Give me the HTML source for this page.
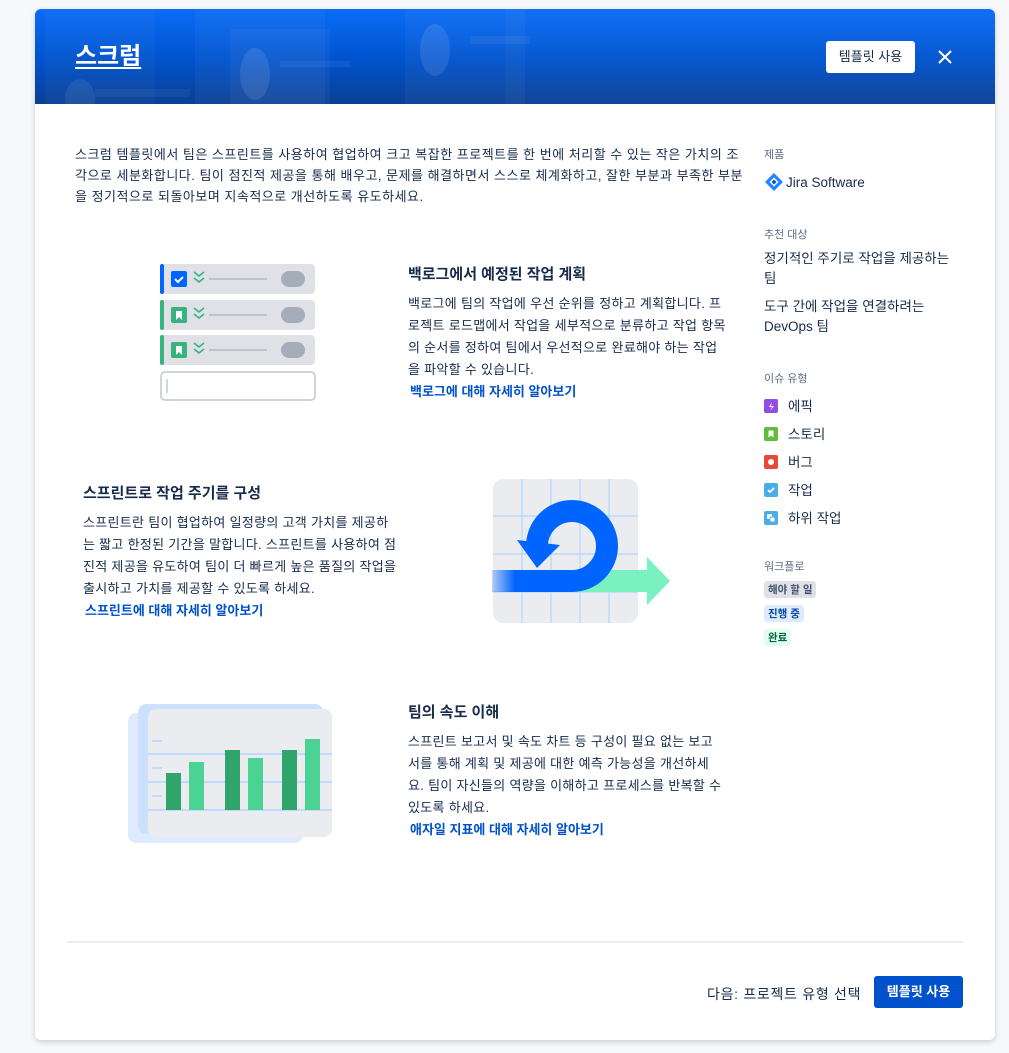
<!DOCTYPE html>
<html><head><meta charset="utf-8"><style>
*{margin:0;padding:0;box-sizing:border-box}
body{width:1009px;height:1053px;background:#f7f8fa;font-family:"Liberation Sans","Noto Sans CJK KR",sans-serif;color:#172b4d;position:relative;overflow:hidden}
.modal{position:absolute;left:35px;top:9px;width:960px;height:1031px;background:#fff;border-radius:6px;box-shadow:0 2px 6px rgba(9,30,66,.2);overflow:hidden}
.hdr{position:absolute;left:0;top:0;width:960px;height:95px;background:linear-gradient(180deg,#0a6cf7 0%,#0052cc 55%,#0a3f93 100%);overflow:hidden}
.a{position:absolute}
.t{position:absolute;font-size:13px;line-height:22px;color:#172b4d;letter-spacing:.3px;word-break:break-all}
h3{position:absolute;font-size:15px;font-weight:bold;color:#172b4d}
.lnk{position:absolute;font-size:13px;font-weight:bold;color:#0052cc}
.lbl{position:absolute;font-size:11px;color:#5e6c84;left:729px}
.side{position:absolute;left:729px;font-size:13.5px;color:#172b4d}
.ic{display:inline-block;width:14px;height:14px;border-radius:2px;vertical-align:-2px;margin-right:10px;position:relative}
.ic svg{position:absolute;left:0;top:0}
.tag{position:absolute;left:729px;font-size:10.5px;font-weight:bold;padding:1px 4px;border-radius:3px}
</style></head><body>
<div class="modal">
<div class="hdr">
 <div class="a" style="left:10px;top:0;width:110px;height:95px;background:rgba(255,255,255,.03)"></div>
 <div class="a" style="left:160px;top:0;width:130px;height:95px;background:rgba(255,255,255,.04)"></div>
 <div class="a" style="left:30px;top:70px;width:30px;height:40px;border-radius:50%;background:rgba(255,255,255,.08)"></div>
 <div class="a" style="left:60px;top:80px;width:95px;height:8px;background:rgba(255,255,255,.05)"></div>
 <div class="a" style="left:195px;top:20px;width:100px;height:75px;background:rgba(255,255,255,.04)"></div>
 <div class="a" style="left:205px;top:39px;width:30px;height:52px;border-radius:50%;background:rgba(255,255,255,.1)"></div>
 <div class="a" style="left:245px;top:52px;width:70px;height:6px;background:rgba(255,255,255,.06)"></div>
 <div class="a" style="left:370px;top:0;width:120px;height:95px;background:rgba(255,255,255,.04)"></div>
 <div class="a" style="left:385px;top:15px;width:30px;height:52px;border-radius:50%;background:rgba(255,255,255,.1)"></div>
 <div class="a" style="left:435px;top:27px;width:60px;height:8px;background:rgba(255,255,255,.06)"></div>
 <div class="a" style="left:470px;top:0;width:490px;height:95px;background:rgba(255,255,255,.03)"></div>
 <div class="a" style="left:40px;top:33px;font-size:24px;font-weight:bold;color:#fff;text-decoration:underline;text-underline-offset:3px;line-height:30px">스크럼</div>
 <div class="a" style="left:791px;top:32px;width:89px;height:32px;background:#fff;border-radius:3px;font-size:13px;color:#172b4d;line-height:32px;text-align:center">템플릿 사용</div>
 <svg class="a" style="left:902px;top:40px" width="16" height="16"><path d="M2 2L14 14M14 2L2 14" stroke="#fff" stroke-width="2"/></svg>
</div>

<div class="t" style="left:40px;top:135px;width:668px;line-height:21px;letter-spacing:.5px">스크럼 템플릿에서 팀은 스프린트를 사용하여 협업하여 크고 복잡한 프로젝트를 한 번에 처리할 수 있는 작은 가치의 조각으로 세분화합니다. 팀이 점진적 제공을 통해 배우고, 문제를 해결하면서 스스로 체계화하고, 잘한 부분과 부족한 부분을 정기적으로 되돌아보며 지속적으로 개선하도록 유도하세요.</div>

<!-- backlog illus -->
<svg class="a" style="left:122px;top:252px" width="162" height="145">
 <g><rect x="3" y="3" width="155" height="30" rx="4" fill="#dfe1e6"/><rect x="3" y="3" width="4" height="30" rx="2" fill="#0065ff"/><rect x="14" y="10" width="16" height="16" rx="2" fill="#0065ff"/><path d="M18 18l3 3 5-5" stroke="#fff" stroke-width="2" fill="none"/><path d="M37 11l5 4 5-4M37 17l5 4 5-4" stroke="#36b37e" stroke-width="1.6" fill="none"/><line x1="52" y1="18" x2="110" y2="18" stroke="#b3b9c4" stroke-width="1.5"/><rect x="124" y="10" width="24" height="16" rx="8" fill="#a5adba"/></g>
 <g transform="translate(0,36)"><rect x="3" y="3" width="155" height="30" rx="4" fill="#dfe1e6"/><rect x="3" y="3" width="4" height="30" rx="2" fill="#36b37e"/><rect x="14" y="10" width="16" height="16" rx="2" fill="#36b37e"/><path d="M19 14h6v9l-3-3-3 3z" fill="#fff"/><path d="M37 11l5 4 5-4M37 17l5 4 5-4" stroke="#36b37e" stroke-width="1.6" fill="none"/><line x1="52" y1="18" x2="110" y2="18" stroke="#b3b9c4" stroke-width="1.5"/><rect x="124" y="10" width="24" height="16" rx="8" fill="#a5adba"/></g>
 <g transform="translate(0,71)"><rect x="3" y="3" width="155" height="30" rx="4" fill="#dfe1e6"/><rect x="3" y="3" width="4" height="30" rx="2" fill="#36b37e"/><rect x="14" y="10" width="16" height="16" rx="2" fill="#36b37e"/><path d="M19 14h6v9l-3-3-3 3z" fill="#fff"/><path d="M37 11l5 4 5-4M37 17l5 4 5-4" stroke="#36b37e" stroke-width="1.6" fill="none"/><line x1="52" y1="18" x2="110" y2="18" stroke="#b3b9c4" stroke-width="1.5"/><rect x="124" y="10" width="24" height="16" rx="8" fill="#a5adba"/></g>
 <rect x="4" y="111" width="154" height="28" rx="4" fill="#fff" stroke="#c1c7d0" stroke-width="1.5"/><line x1="10" y1="118" x2="10" y2="132" stroke="#a5adba"/>
</svg>
<h3 style="left:373px;top:254px">백로그에서 예정된 작업 계획</h3>
<div class="t" style="left:373px;top:284px;width:320px">백로그에 팀의 작업에 우선 순위를 정하고 계획합니다. 프로젝트 로드맵에서 작업을 세부적으로 분류하고 작업 항목의 순서를 정하여 팀에서 우선적으로 완료해야 하는 작업을 파악할 수 있습니다.</div>
<div class="lnk" style="left:375px;top:372px">백로그에 대해 자세히 알아보기</div>

<h3 style="left:48px;top:473px">스프린트로 작업 주기를 구성</h3>
<div class="t" style="left:48px;top:503px;width:315px">스프린트란 팀이 협업하여 일정량의 고객 가치를 제공하는 짧고 한정된 기간을 말합니다. 스프린트를 사용하여 점진적 제공을 유도하여 팀이 더 빠르게 높은 품질의 작업을 출시하고 가치를 제공할 수 있도록 하세요.</div>
<div class="lnk" style="left:50px;top:591px">스프린트에 대해 자세히 알아보기</div>

<svg class="a" style="left:457px;top:469px" width="182" height="150">
 <rect x="1" y="1" width="145" height="144" rx="10" fill="#ebecf0"/>
 <g stroke="#b3d4ff" stroke-width="1.2"><line x1="30" y1="1" x2="30" y2="145"/><line x1="59" y1="1" x2="59" y2="145"/><line x1="88" y1="1" x2="88" y2="145"/><line x1="117" y1="1" x2="117" y2="145"/><line x1="1" y1="38" x2="146" y2="38"/><line x1="1" y1="76" x2="146" y2="76"/><line x1="1" y1="114" x2="146" y2="114"/></g>
 <path d="M80 92h75v-13l23 24-23 24v-13H80z" fill="#79f2c0"/>
 <defs><linearGradient id="g" x1="0" x2="1"><stop offset="0" stop-color="#0065ff" stop-opacity=".25"/><stop offset=".2" stop-color="#0065ff"/></linearGradient></defs>
 <path d="M0 103H80A35 35 0 1 0 45 68" fill="none" stroke="url(#g)" stroke-width="22"/>
 <path d="M25 62L68 67L45 90z" fill="#0065ff"/>
</svg>

<svg class="a" style="left:90px;top:695px" width="210" height="155">
 <rect x="3" y="9" width="175" height="130" rx="8" fill="#deebff"/>
 <rect x="13" y="0" width="185" height="130" rx="8" fill="#cce0ff"/>
 <rect x="23" y="5" width="184" height="128" rx="8" fill="#ebecf0"/>
 <g stroke="#b3d4ff" stroke-width="1.5"><line x1="23" y1="50" x2="207" y2="50"/><line x1="23" y1="78" x2="207" y2="78"/><line x1="23" y1="106" x2="207" y2="106"/><line x1="27" y1="37" x2="37" y2="37"/><line x1="27" y1="64" x2="37" y2="64"/><line x1="27" y1="92" x2="37" y2="92"/></g>
 <rect x="41" y="69" width="15" height="37" fill="#2fa56c"/><rect x="64" y="58" width="15" height="48" fill="#4bd394"/>
 <rect x="100" y="46" width="15" height="60" fill="#2fa56c"/><rect x="123" y="54" width="15" height="52" fill="#4bd394"/>
 <rect x="157" y="46" width="15" height="60" fill="#2fa56c"/><rect x="180" y="35" width="15" height="71" fill="#4bd394"/>
</svg>
<h3 style="left:373px;top:692px">팀의 속도 이해</h3>
<div class="t" style="left:373px;top:722px;width:314px">스프린트 보고서 및 속도 차트 등 구성이 필요 없는 보고서를 통해 계획 및 제공에 대한 예측 가능성을 개선하세요. 팀이 자신들의 역량을 이해하고 프로세스를 반복할 수 있도록 하세요.</div>
<div class="lnk" style="left:375px;top:810px">애자일 지표에 대해 자세히 알아보기</div>

<div class="lbl" style="top:137px">제품</div>
<div class="side" style="top:163px"><svg width="20" height="20" style="vertical-align:-5px;margin-right:2px"><path d="M10 1l9 9-9 9-9-9z" fill="#2684ff"/><path d="M10 5.5l4.5 4.5-4.5 4.5-4.5-4.5z" fill="#fff"/><path d="M10 7.5l2.5 2.5-2.5 2.5-2.5-2.5z" fill="#0052cc"/></svg>Jira Software</div>
<div class="lbl" style="top:217px">추천 대상</div>
<div class="side" style="top:240px;width:200px;line-height:20px">정기적인 주기로 작업을 제공하는 팀</div>
<div class="side" style="top:288px;width:200px;line-height:20px">도구 간에 작업을 연결하려는 DevOps 팀</div>
<div class="lbl" style="top:361px">이슈 유형</div>
<div class="side" style="top:386px"><span class="ic" style="background:#904ee2"><svg width="14" height="14"><path d="M8 3L5 8h3l-2 4 4-5H7z" fill="#fff"/></svg></span>에픽</div>
<div class="side" style="top:414px"><span class="ic" style="background:#63ba3c"><svg width="14" height="14"><path d="M4.5 3.5h5v7l-2.5-2-2.5 2z" fill="#fff"/></svg></span>스토리</div>
<div class="side" style="top:442px"><span class="ic" style="background:#e5493a"><svg width="14" height="14"><circle cx="7" cy="7" r="3" fill="#fff"/></svg></span>버그</div>
<div class="side" style="top:470px"><span class="ic" style="background:#4bade8"><svg width="14" height="14"><path d="M4 7l2 2 4-4" stroke="#fff" stroke-width="1.8" fill="none"/></svg></span>작업</div>
<div class="side" style="top:498px"><span class="ic" style="background:#4bade8"><svg width="14" height="14"><rect x="3" y="3" width="5" height="5" rx="1" fill="#fff"/><rect x="6" y="6" width="5" height="5" rx="1" fill="#fff" stroke="#4bade8"/></svg></span>하위 작업</div>
<div class="lbl" style="top:549px">워크플로</div>
<div class="tag" style="top:572px;background:#dfe1e6;color:#42526e">해야 할 일</div>
<div class="tag" style="top:596px;background:#deebff;color:#0747a6">진행 중</div>
<div class="tag" style="top:620px;background:#e3fcef;color:#006644">완료</div>

<div class="a" style="left:32px;top:932px;width:896px;height:2px;background:#ebecf0"></div>
<div class="a" style="left:672px;top:975px;font-size:14px;color:#172b4d;letter-spacing:.7px">다음: 프로젝트 유형 선택</div>
<div class="a" style="left:839px;top:967px;width:89px;height:32px;background:#0052cc;border-radius:3px;color:#fff;font-size:13px;font-weight:bold;line-height:32px;text-align:center">템플릿 사용</div>
</div>
</body></html>
